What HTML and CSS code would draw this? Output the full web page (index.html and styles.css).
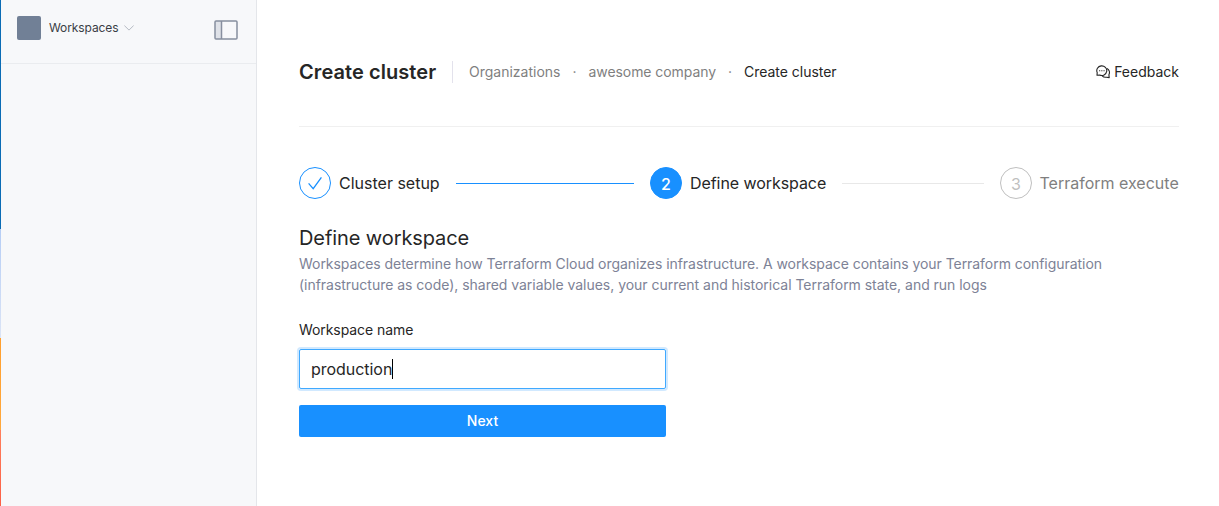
FILE: index.html
```html
<!DOCTYPE html>
<html lang="en">
<head>
<meta charset="utf-8">
<title>Create cluster</title>
<link rel="stylesheet" href="styles.css">
</head>
<body>
<div class="app">
  <div class="edge"></div>
  <aside class="sidebar">
    <div class="sidebar-head">
      <span class="avatar"></span>
      <span class="switcher">Workspaces</span>
      <svg class="chevron" width="10" height="6" viewBox="0 0 10 6" fill="none" stroke="#b5bac3"><path d="M.4.6 5 5.1 9.6.6"/></svg>
      <svg class="panel-icon" width="24" height="20" viewBox="0 0 24 20" fill="none"><path fill="#dfe2e8" d="M1 1h7v18H1z"/><rect x="1" y="1" width="22" height="18" rx="1" stroke="#878f9f" stroke-width="1.5"/><path d="M7.5 1v18" stroke="#878f9f" stroke-width="1.5"/></svg>
    </div>
  </aside>
  <main class="main">
    <header class="header">
      <h1 class="title">Create cluster</h1>
      <nav class="crumbs">
        <span class="crumb">Organizations</span><span class="dot">·</span><span class="crumb company">awesome company</span><span class="dot">·</span><span class="crumb current">Create cluster</span>
      </nav>
      <a class="feedback">
        <svg width="14" height="14" viewBox="0 0 14 14" fill="none" stroke="#262626" stroke-width="1.1" stroke-linejoin="round"><path d="M1 10.2 1.2 7.6A5 4.8 0 1 1 3.6 10Z"/><path d="M11 3.4a4.6 4.6 0 0 1 1.9 6.3l.3 2.9-2.7-.4a5 5 0 0 1-4.4-1.4"/><path d="M3.1 5.7h1.1M5.3 5.7h1.1M7.5 5.7h1.1"/></svg>
        <span>Feedback</span>
      </a>
    </header>
    <div class="steps">
      <div class="step grow first">
        <span class="step-icon done"><svg width="16" height="14" viewBox="0 0 16 14" fill="none" stroke="#1890ff" stroke-width="1.3"><path d="m1.6 7.4 4.6 5.2L14.4 1.4"/></svg></span>
        <span class="step-label">Cluster setup</span>
        <span class="line active"></span>
      </div>
      <div class="step grow">
        <span class="step-icon now">2</span>
        <span class="step-label tight">Define workspace</span>
        <span class="line"></span>
      </div>
      <div class="step last">
        <span class="step-icon wait">3</span>
        <span class="step-label muted">Terraform execute</span>
      </div>
    </div>
    <h2 class="subtitle">Define workspace</h2>
    <p class="desc">Workspaces determine how Terraform Cloud organizes infrastructure. A workspace contains your Terraform configuration<br><span class="second">(infrastructure as code), shared variable values, your current and historical Terraform state, and run logs</span></p>
    <div class="form">
      <div class="label">Workspace name</div>
      <div class="input"><span>production</span><i class="caret"></i></div>
      <button class="next">Next</button>
    </div>
  </main>
</div>
</body>
</html>
```
FILE: styles.css
```css
* { box-sizing: border-box; }
body { margin: 0; background: #fff; color: #262626; font-family: Inter, sans-serif; font-size: 14px; }
.app { display: flex; height: 506px; overflow: hidden; }
.edge { width: 1px; flex: none; background: linear-gradient(#0a6cb5 0 229px, #b5cdf5 229px, #dbe4f6 338px, #ff9f2e 338px, #ffa83c 430px, #ff7f5c 430px, #fb5f45 506px); }
.sidebar { width: 256px; flex: none; background: #f7f8fa; border-right: 1px solid #e4e6ea; }
.sidebar-head { display: flex; align-items: flex-start; height: 64px; padding: 16px 18px 0 16px; border-bottom: 1px solid #eaecef; }
.avatar { width: 24px; height: 24px; border-radius: 2px; background: #718096; }
.switcher { margin-left: 8px; font-size: 12px; line-height: 24px; letter-spacing: -.1px; color: #3a3d45; }
.chevron { margin: 9px 0 0 6px; }
.panel-icon { margin: 4px 0 0 auto; }
.main { width: 880px; margin-left: 42px; }
.header { display: flex; align-items: center; height: 127px; padding: 17px 0 0; border-bottom: 1px solid #f0f0f0; }
.title { width: 137px; margin: 0; font-size: 20px; line-height: 22px; font-weight: 600; letter-spacing: .07px; white-space: nowrap; }
.crumbs { display: flex; align-items: center; height: 22px; margin-left: 16px; padding-left: 16px; border-left: 1px solid #e3e2ec; }
.crumb { color: #7f7f7f; white-space: nowrap; }
.crumb.company { letter-spacing: -.07px; }
.crumb.current { color: #262626; letter-spacing: -.02px; }
.dot { width: 28px; text-align: center; color: #7f7f7f; }
.feedback { display: flex; align-items: center; gap: 4px; margin-left: auto; }
.steps { display: flex; align-items: center; height: 32px; margin-top: 40px; }
.step { display: flex; align-items: center; font-size: 16px; white-space: nowrap; }
.grow { flex: 1; margin-right: 16px; }
.first { flex: 0 0 335px; }
.last { flex: 0 0 179.5px; }
.step-label { margin-left: 8px; }
.tight { letter-spacing: -.07px; }
.step-icon { display: flex; flex: none; align-items: center; justify-content: center; width: 32px; height: 32px; border: 1px solid; border-radius: 50%; }
.done { border-color: #1890ff; }
.now { padding-top: 1px; border-color: #1890ff; background: #1890ff; color: #fff; font-weight: 500; }
.wait { padding: 1px 0 0 1px; border-color: #bfbfbf; color: #bfbfbf; }
.muted { color: #7f7f7f; }
.line { flex: 1; height: 1px; margin-left: 16px; background: #e8e8e8; }
.line.active { background: #1890ff; }
.subtitle { margin: 25px 0 0; font-size: 20px; line-height: 28px; font-weight: 400; letter-spacing: -.09px; }
.desc { margin: 1px 0 0; line-height: 21px; color: #7d8296; letter-spacing: -.05px; white-space: nowrap; }
.second { letter-spacing: -.025px; }
.form { width: 367px; margin-top: 24px; }
.label { line-height: 22px; letter-spacing: -.07px; }
.input { display: flex; align-items: center; height: 40px; margin-top: 8px; padding: 0 11px; border: 1px solid #40a9ff; border-radius: 2px; box-shadow: 0 0 0 2px rgba(24, 144, 255, .2); font-size: 16px; letter-spacing: -.04px; }
.caret { width: 1px; height: 20px; background: #000; }
.next { display: block; width: 100%; height: 32px; margin-top: 16px; padding: 0 0 1px; border: 0; border-radius: 2px; background: #1890ff; color: #fff; font: 500 14px Inter, sans-serif; }
```
